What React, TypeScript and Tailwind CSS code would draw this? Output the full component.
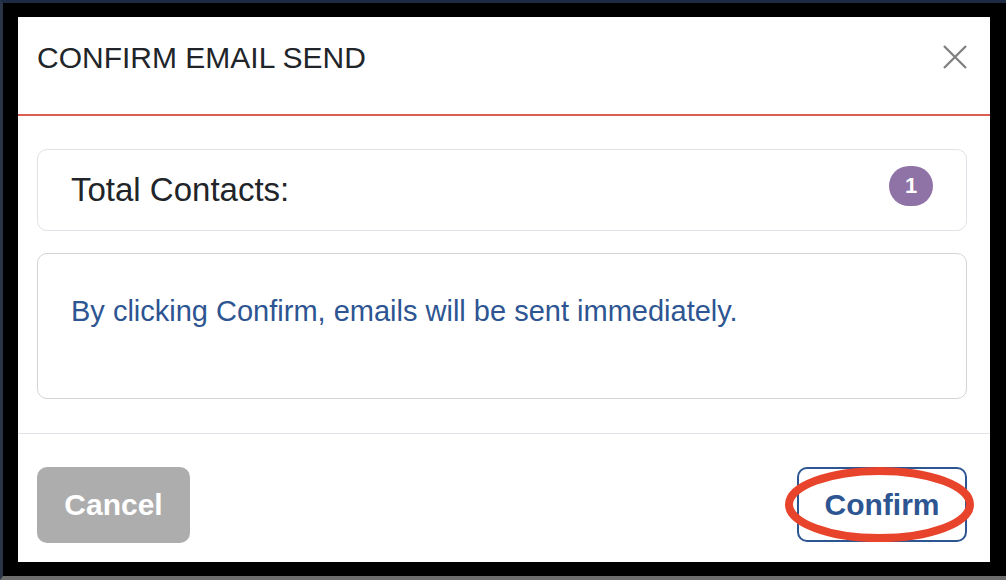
const FONT = { fontFamily: '"Liberation Sans", Arial, sans-serif' };

function CloseIcon() {
  return (
    <svg viewBox="0 0 24 24" className="size-[24px]" fill="none" stroke="currentColor" strokeWidth={2.3}>
      <path d="M1 1 L23 23 M23 1 L1 23" />
    </svg>
  );
}

function ConfirmSendModal() {
  return (
    <div className="flex h-[545px] w-[972px] flex-col bg-white" style={FONT}>
      {/* header */}
      <div className="flex h-[97px] shrink-0 items-start justify-between pl-[19px] pr-[23px] pt-[26px]">
        <h2 className="text-[30px] leading-none font-normal text-[#212529]">
          CONFIRM EMAIL SEND
        </h2>
        <button type="button" className="mt-[2px] text-[#808080]" aria-label="Close">
          <CloseIcon />
        </button>
      </div>
      <div className="h-[1.5px] shrink-0 bg-[#dc5e4e]" />

      {/* body */}
      <div className="flex flex-col gap-[22px] pb-[34px] pl-[19px] pr-[23px] pt-[33px]">
        <div className="flex h-[82px] items-center justify-between rounded-[10px] border border-[#dfe2e6] px-[33px]">
          <span className="text-[33px] leading-none text-[#212529]">Total Contacts:</span>
          <span className="mb-[8px] grid h-[40px] w-[44px] place-items-center rounded-full bg-[#8f72a6] text-[22px] font-bold leading-none text-white">
            1
          </span>
        </div>
        <div className="h-[146px] rounded-[10px] border border-[#d3d3d3] pl-[33px] pt-[43px]">
          <p className="text-[29px] leading-none text-[#2d5592]">
            By clicking Confirm, emails will be sent immediately.
          </p>
        </div>
      </div>

      {/* footer */}
      <div className="flex flex-1 items-start justify-between border-t border-t-[#dfe2e6] pl-[19px] pr-[23px] pt-[33px]">
        <button
          type="button"
          className="h-[76px] w-[153px] rounded-[10px] bg-[#adadad] text-[30px] font-bold text-white"
        >
          Cancel
        </button>
        <div className="relative">
          <button
            type="button"
            className="h-[75px] w-[170px] rounded-[10px] border-2 border-[#2d5592] bg-white text-[30px] font-bold text-[#2d5592]"
          >
            Confirm
          </button>
          <svg
            className="pointer-events-none absolute -left-[12px] top-0 h-[75px] w-[189px]"
            viewBox="0 0 189 75"
          >
            <ellipse cx="94.5" cy="37.5" rx="90.5" ry="33.5" fill="none" stroke="#e8432b" strokeWidth="8" />
          </svg>
        </div>
      </div>
    </div>
  );
}

export default function App() {
  return (
    <div className="h-[580px] w-[1006px] overflow-hidden border-b-4 border-l-[3px] border-t-[3px] border-b-[#6d6d6d] border-l-[#2a3447] border-t-[#1d2b42] bg-black">
      <div className="pb-[14px] pl-[15px] pr-[16px] pt-[14px]">
        <ConfirmSendModal />
      </div>
    </div>
  );
}
